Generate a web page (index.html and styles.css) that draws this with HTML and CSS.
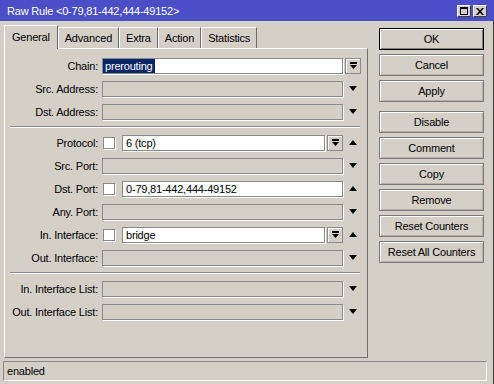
FILE: index.html
```html
<!DOCTYPE html>
<html lang="en">
<head>
  <meta charset="UTF-8" />
  <title>Raw Rule</title>
  <link rel="stylesheet" href="styles.css">
</head>
<body>
  <div class="window">
    <div class="titlebar">
      <span class="title">Raw Rule &lt;0-79,81-442,444-49152&gt;</span>
      <div class="title-buttons">
        <span class="tbtn">
          <svg width="8" height="8" viewBox="0 0 8 8"><path d="M0 0h8v8h-8z M1 2v5h6v-5z" fill="#000" fill-rule="evenodd"/></svg>
        </span>
        <span class="tbtn">
          <svg width="8" height="7" viewBox="0 0 8 7"><path d="M0 0h2l2 2.2 2-2.2h2l-3 3.5 3 3.5h-2l-2-2.2-2 2.2h-2l3-3.5z" fill="#000"/></svg>
        </span>
      </div>
    </div>

    <div class="frame">
      <div class="content">
        <div class="main">
          <div class="tabs">
            <div class="tab active">General</div>
            <div class="tab">Advanced</div>
            <div class="tab">Extra</div>
            <div class="tab">Action</div>
            <div class="tab">Statistics</div>
          </div>

          <div class="panel">
            <div class="row">
              <span class="label">Chain:</span>
              <div class="ctrl">
                <div class="input enabled chain"><span class="selected">prerouting</span></div>
                <span class="dd-btn"><svg width="9" height="8" viewBox="0 0 9 8"><rect x="1" y="0" width="7" height="2"/><path d="M1 3h7l-3.5 4z"/></svg></span>
              </div>
            </div>
            <div class="row">
              <span class="label">Src. Address:</span>
              <div class="ctrl">
                <div class="input"></div>
                <span class="arrow-cell"><span class="tri down"></span></span>
              </div>
            </div>
            <div class="row">
              <span class="label">Dst. Address:</span>
              <div class="ctrl">
                <div class="input"></div>
                <span class="arrow-cell"><span class="tri down"></span></span>
              </div>
            </div>

            <div class="separator"></div>

            <div class="row">
              <span class="label">Protocol:</span>
              <div class="ctrl">
                <span class="check"></span>
                <div class="input enabled">6 (tcp)</div>
                <span class="dd-btn"><svg width="9" height="8" viewBox="0 0 9 8"><rect x="1" y="0" width="7" height="2"/><path d="M1 3h7l-3.5 4z"/></svg></span>
                <span class="arrow-cell"><span class="tri up"></span></span>
              </div>
            </div>
            <div class="row">
              <span class="label">Src. Port:</span>
              <div class="ctrl">
                <div class="input"></div>
                <span class="arrow-cell"><span class="tri down"></span></span>
              </div>
            </div>
            <div class="row">
              <span class="label">Dst. Port:</span>
              <div class="ctrl">
                <span class="check"></span>
                <div class="input enabled">0-79,81-442,444-49152</div>
                <span class="arrow-cell"><span class="tri up"></span></span>
              </div>
            </div>
            <div class="row">
              <span class="label">Any. Port:</span>
              <div class="ctrl">
                <div class="input"></div>
                <span class="arrow-cell"><span class="tri down"></span></span>
              </div>
            </div>
            <div class="row">
              <span class="label">In. Interface:</span>
              <div class="ctrl">
                <span class="check"></span>
                <div class="input enabled">bridge</div>
                <span class="dd-btn"><svg width="9" height="8" viewBox="0 0 9 8"><rect x="1" y="0" width="7" height="2"/><path d="M1 3h7l-3.5 4z"/></svg></span>
                <span class="arrow-cell"><span class="tri up"></span></span>
              </div>
            </div>
            <div class="row">
              <span class="label">Out. Interface:</span>
              <div class="ctrl">
                <div class="input"></div>
                <span class="arrow-cell"><span class="tri down"></span></span>
              </div>
            </div>

            <div class="separator"></div>

            <div class="row">
              <span class="label">In. Interface List:</span>
              <div class="ctrl">
                <div class="input"></div>
                <span class="arrow-cell"><span class="tri down"></span></span>
              </div>
            </div>
            <div class="row">
              <span class="label">Out. Interface List:</span>
              <div class="ctrl">
                <div class="input"></div>
                <span class="arrow-cell"><span class="tri down"></span></span>
              </div>
            </div>
          </div>
        </div>

        <div class="buttons">
          <div class="btn default">OK</div>
          <div class="btn">Cancel</div>
          <div class="btn">Apply</div>
          <div class="btn spaced">Disable</div>
          <div class="btn">Comment</div>
          <div class="btn">Copy</div>
          <div class="btn">Remove</div>
          <div class="btn">Reset Counters</div>
          <div class="btn">Reset All Counters</div>
        </div>
      </div>

      <div class="status">
        <div class="status-field">enabled</div>
      </div>
    </div>
  </div>
</body>
</html>
```

FILE: styles.css
```css
body {
  margin: 0;
  font-family: 'Liberation Sans', Arial, sans-serif;
  font-size: 11px;
  letter-spacing: -0.2px;
  color: #000;
}

.window {
  width: 494px;
  height: 384px;
  background-color: #d4d0c8;
  display: flex;
  flex-direction: column;
}

.titlebar {
  height: 21px;
  flex-shrink: 0;
  background-color: #4b4fc7;
  color: #fff;
  display: flex;
  align-items: center;
  justify-content: space-between;
  padding: 0 7px 0 7px;
}

.title-buttons {
  display: flex;
  gap: 2px;
  margin-top: 1px;
}

.tbtn {
  width: 14px;
  height: 12px;
  box-sizing: border-box;
  background-color: #d4d0c8;
  border: 1px solid;
  border-color: #fff #404040 #404040 #fff;
  display: flex;
  align-items: center;
  justify-content: center;
}

.frame {
  flex: 1;
  border-right: 1px solid #3c3c3c;
  display: flex;
  flex-direction: column;
}

.content {
  display: flex;
  height: 337px;
  padding-left: 4px;
}

.main {
  width: 364px;
  display: flex;
  flex-direction: column;
}

.tabs {
  height: 27px;
  display: flex;
  align-items: flex-end;
  position: relative;
  z-index: 1;
}

.tab {
  height: 21px;
  box-sizing: border-box;
  padding: 0 6px;
  line-height: 20px;
  border-left: 1px solid #fff;
  border-top: 1px solid #fff;
  border-right: 1px solid #6a6a6a;
  white-space: nowrap;
}

.tab.active {
  height: 24px;
  margin-bottom: -1px;
  padding: 0 7px;
  line-height: 22px;
  background-color: #d4d0c8;
}

.panel {
  height: 310px;
  box-sizing: border-box;
  border: 1px solid;
  border-color: #fff #6f6f6f #6f6f6f #fff;
  padding: 8px 6px 0 0;
  display: flex;
  flex-direction: column;
  gap: 6px;
}

.row {
  height: 17px;
  display: flex;
  align-items: center;
}

.label {
  width: 93px;
  margin-right: 4px;
  text-align: right;
  white-space: nowrap;
}

.ctrl {
  flex: 1;
  height: 17px;
  display: flex;
  align-items: center;
  gap: 2px;
}

.input {
  flex: 1;
  height: 16px;
  box-sizing: border-box;
  border: 1px solid #8a8a8a;
  box-shadow: 1px 1px 0 #fff;
  background-color: #d4d0c8;
  padding-left: 3px;
  line-height: 14px;
  white-space: nowrap;
  overflow: hidden;
}

.input.enabled {
  background-color: #fff;
}

.input.chain {
  padding-left: 0;
}

.selected {
  display: inline-block;
  height: 14px;
  padding: 0 2px;
  background-color: #0a246a;
  color: #fff;
}

.check {
  width: 12px;
  height: 12px;
  margin: 0 5px 0 1px;
  box-sizing: border-box;
  border: 1px solid #8a8a8a;
  box-shadow: 1px 1px 0 #fff;
  background-color: #fff;
}

.dd-btn {
  width: 16px;
  height: 16px;
  box-sizing: border-box;
  border: 1px solid #8a8a8a;
  box-shadow: inset 1px 1px 0 #fff;
  display: flex;
  align-items: center;
  justify-content: center;
}

.arrow-cell {
  width: 16px;
  height: 16px;
  display: flex;
  align-items: center;
  justify-content: center;
}

.tri {
  width: 0;
  height: 0;
  border-left: 4px solid transparent;
  border-right: 4px solid transparent;
}

.tri.down {
  border-top: 5px solid #000;
}

.tri.up {
  border-bottom: 5px solid #000;
}

.separator {
  height: 0;
  border-top: 1px solid #8a8a8a;
  border-bottom: 1px solid #fff;
  margin: 0 1px 0 5px;
}

.buttons {
  width: 105px;
  margin: 7px 0 0 11px;
  display: flex;
  flex-direction: column;
  gap: 4px;
}

.btn {
  height: 22px;
  box-sizing: border-box;
  border: 1px solid #7a7a7a;
  box-shadow: inset 1px 1px 0 #fff, inset -1px -1px 0 #b4b0a8;
  text-align: center;
  line-height: 20px;
  white-space: nowrap;
}

.btn.default {
  border-color: #000;
  box-shadow: inset 1px 1px 0 #fff, inset -1px -1px 0 #808080;
}

.btn.spaced {
  margin-top: 5px;
}

.status {
  padding: 3px 6px 0 3px;
}

.status-field {
  height: 20px;
  box-sizing: border-box;
  border: 1px solid;
  border-color: #8a8a8a #fff #fff #8a8a8a;
  padding-left: 3px;
  line-height: 18px;
}
```
